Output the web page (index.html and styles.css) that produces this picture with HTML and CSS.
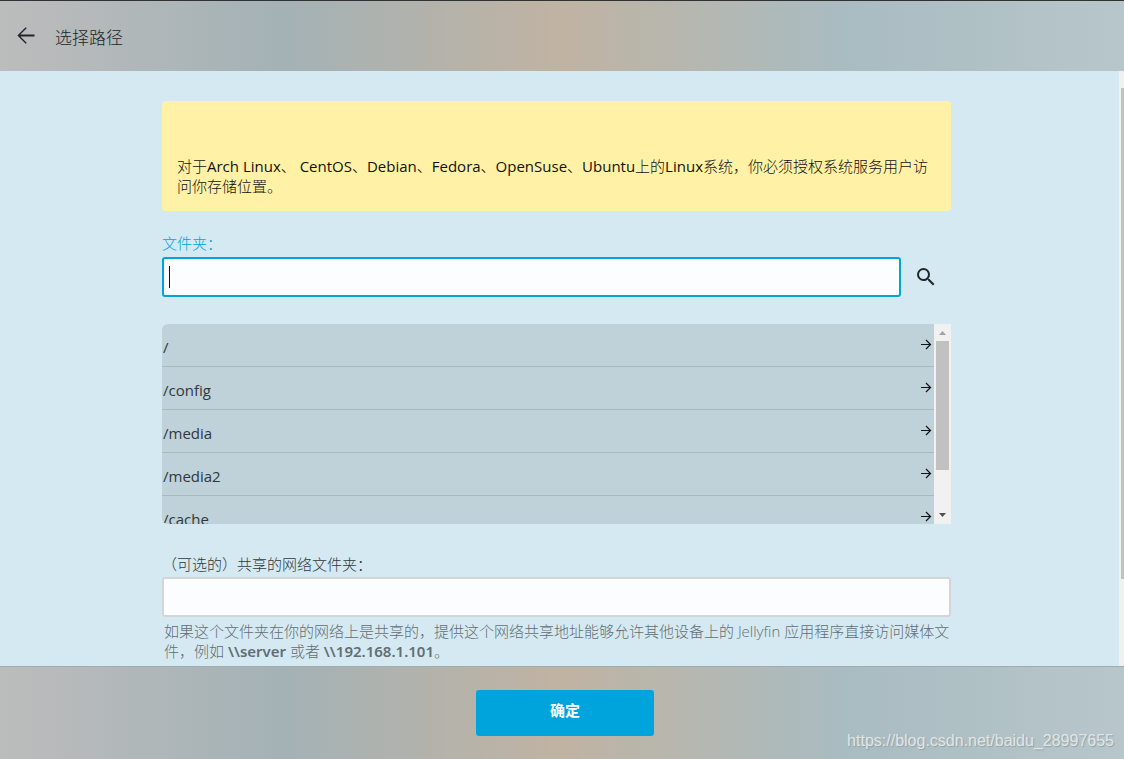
FILE: index.html
```html
<!DOCTYPE html>
<html lang="zh-CN">
<head>
<meta charset="utf-8">
<title>选择路径</title>
<link rel="stylesheet" href="styles.css">
</head>
<body>
<div class="dialog">
  <header class="dialog-header">
    <button class="icon-button" type="button" aria-label="返回">
      <svg class="icon" viewBox="0 0 24 24"><path d="M20.500 10.500H6.400l6.300-6.300L11.700 3.200 3.400 11.500l8.300 8.300 1-1L6.400 12.500H20.500z"/></svg>
    </button>
    <h1 class="dialog-title">选择路径</h1>
  </header>
  <main class="dialog-main">
    <form class="form" id="path-form">
      <div class="notice">对于Arch Linux、 CentOS、Debian、Fedora、OpenSuse、Ubuntu上的Linux系统，你必须授权系统服务用户访问你存储位置。</div>
      <label class="label label-active" for="folder">文件夹：</label>
      <div class="folder-row">
        <div class="field">
          <input class="input input-active" id="folder" type="text">
          <span class="caret"></span>
        </div>
        <button class="icon-button search-button" type="button" aria-label="搜索">
          <svg class="icon" viewBox="0 0 24 24"><path d="M15.5 14h-.79l-.28-.27A6.471 6.471 0 0 0 16 9.500 6.500 6.500 0 1 0 9.500 16c1.610 0 3.090-.59 4.230-1.570l.27.28v.79l5 4.990L20.490 19l-4.990-5zm-6 0C7.010 14 5 11.990 5 9.500S7.010 5 9.500 5 14 7.010 14 9.500 11.990 14 9.500 14z"/></svg>
        </button>
      </div>
      <div class="browser">
        <div class="paths">
          <button class="path" type="button"><span class="path-name">/</span><svg class="arrow" viewBox="0 0 12 12"><path d="M1 5.500h10M6 1l4.500 4.500L6 10"/></svg></button>
          <button class="path" type="button"><span class="path-name">/config</span><svg class="arrow" viewBox="0 0 12 12"><path d="M1 5.500h10M6 1l4.500 4.500L6 10"/></svg></button>
          <button class="path" type="button"><span class="path-name">/media</span><svg class="arrow" viewBox="0 0 12 12"><path d="M1 5.500h10M6 1l4.500 4.500L6 10"/></svg></button>
          <button class="path" type="button"><span class="path-name">/media2</span><svg class="arrow" viewBox="0 0 12 12"><path d="M1 5.500h10M6 1l4.500 4.500L6 10"/></svg></button>
          <button class="path" type="button"><span class="path-name">/cache</span><svg class="arrow" viewBox="0 0 12 12"><path d="M1 5.500h10M6 1l4.500 4.500L6 10"/></svg></button>
        </div>
        <div class="scrollbar">
          <svg class="scroll-arrow scroll-up" viewBox="0 0 17 17"><path d="M5 11h7L8.500 7z"/></svg>
          <div class="scroll-track"><div class="scroll-thumb"></div></div>
          <svg class="scroll-arrow" viewBox="0 0 17 17"><path d="M5 6h7L8.500 10z"/></svg>
        </div>
      </div>
      <label class="label" for="network">（可选的）共享的网络文件夹：</label>
      <input class="input" id="network" type="text">
      <p class="help">如果这个文件夹在你的网络上是共享的，提供这个网络共享地址能够允许其他设备上的 Jellyfin 应用程序直接访问媒体文件，例如 <b>\\server</b> 或者 <b>\\192.168.1.101</b>。</p>
    </form>
    <div class="page-scroll"><div class="page-thumb"></div></div>
  </main>
  <footer class="dialog-footer">
    <button class="submit" type="submit" form="path-form">确定</button>
    <span class="watermark">https://blog.csdn.net/baidu_28997655</span>
  </footer>
</div>
</body>
</html>
```
FILE: styles.css
```css
* {
  box-sizing: border-box;
}

body {
  margin: 0;
  font-family: "Open Sans", "Noto Sans CJK SC Light", "Noto Sans CJK SC", sans-serif;
  font-size: 15px;
  line-height: 20px;
  color: #30383b;
}

button,
input {
  font: inherit;
  color: inherit;
}

.dialog {
  display: flex;
  flex-direction: column;
  height: 100vh;
  background: #d5e9f2;
}

.dialog-header,
.dialog-footer {
  flex: none;
  display: flex;
  align-items: center;
  background: linear-gradient(90deg, #bcbcbc, #a4b2b6 25%, #c0b3a2 50%, #a9bcc1 75%, #b7c6cb);
}

.dialog-header {
  height: 71px;
  padding: 0 14px;
  gap: 17px;
  border-top: 1px solid #303234;
}

.icon-button {
  flex: none;
  display: flex;
  padding: 0;
  border: 0;
  background: none;
  color: #202628;
}

.icon {
  width: 24px;
  height: 24px;
  fill: currentColor;
}

.dialog-title {
  margin: 0;
  padding-top: 3px;
  font-size: 17px;
  line-height: 24px;
  font-weight: 300;
  color: #202628;
}

.dialog-main {
  flex: 1;
  display: flex;
  min-height: 0;
  overflow: hidden;
}

.form {
  width: 100%;
  max-width: 789px;
  margin: 0 auto;
  padding-top: 30px;
}

.notice {
  margin-bottom: 22px;
  padding: 55px 15px 15px;
  border-radius: 4px;
  background: #fff2a7;
  color: #111;
}

.label {
  display: block;
  margin-bottom: 3px;
  font-weight: 300;
}

.label-active {
  margin-bottom: 4px;
  color: #00a4dc;
}

.folder-row {
  display: flex;
  align-items: center;
  gap: 13px;
  margin-bottom: 27px;
  padding-right: 13px;
}

.field {
  position: relative;
  flex: 1;
}

.input {
  display: block;
  width: 100%;
  height: 40px;
  padding: 0 6px;
  border: 2px solid #d3d5d7;
  border-radius: 3px;
  outline: 0;
  background: #fcfdff;
}

.input-active {
  border-color: #00a4dc;
}

.caret {
  position: absolute;
  left: 7px;
  top: 9px;
  width: 1px;
  height: 22px;
  background: #111;
}

.browser {
  display: flex;
  height: 200px;
  margin-bottom: 30px;
  border-radius: 6px 0 0 6px;
  overflow: hidden;
  background: #bfd1d9;
}

.paths {
  flex: 1;
  overflow: hidden;
}

.path {
  display: flex;
  align-items: center;
  justify-content: space-between;
  width: 100%;
  height: 43px;
  padding: 0 2px 0 1px;
  border: 0;
  border-bottom: 1px solid #a9babf;
  background: none;
  text-align: left;
}

.path-name {
  padding-top: 4px;
}

.arrow {
  width: 12px;
  height: 12px;
  fill: none;
  stroke: #101415;
  stroke-width: 1.2;
}

.scrollbar {
  display: flex;
  flex-direction: column;
  width: 17px;
  background: #f1f1f1;
}

.scroll-arrow {
  flex: none;
  width: 17px;
  height: 17px;
  fill: #505050;
}

.scroll-up {
  fill: #a3a3a3;
}

.scroll-track {
  flex: 1;
  padding: 0 2px;
}

.scroll-thumb {
  height: 78%;
  background: #c1c1c1;
}

.help {
  margin: 4px 0 0;
  padding-left: 2px;
  color: #626e73;
  font-weight: 300;
}

.help b {
  font-family: "Noto Sans", sans-serif;
  font-weight: 600;
}

.page-scroll {
  flex: none;
  width: 5px;
  margin-left: 6px;
  padding: 17px 0 0 2px;
  background: #f1f1f1;
}

.page-thumb {
  height: 85%;
  background: #c1c1c1;
}

.dialog-footer {
  position: relative;
  justify-content: center;
  height: 93px;
  padding-left: 6px;
  border-top: 1px solid #a2abad;
}

.submit {
  width: 178px;
  height: 46px;
  padding: 0 0 6px;
  border: 0;
  border-radius: 3px;
  background: #00a4dc;
  color: #fff;
  font-family: "Open Sans", "Noto Sans CJK SC", sans-serif;
  font-weight: 700;
}

.watermark {
  position: absolute;
  right: 10px;
  bottom: 8px;
  font-family: "Liberation Sans", Arial, sans-serif;
  font-size: 16px;
  color: #e0e6e8;
  text-shadow: 1px 1px 1px #94a0a4;
}
```
